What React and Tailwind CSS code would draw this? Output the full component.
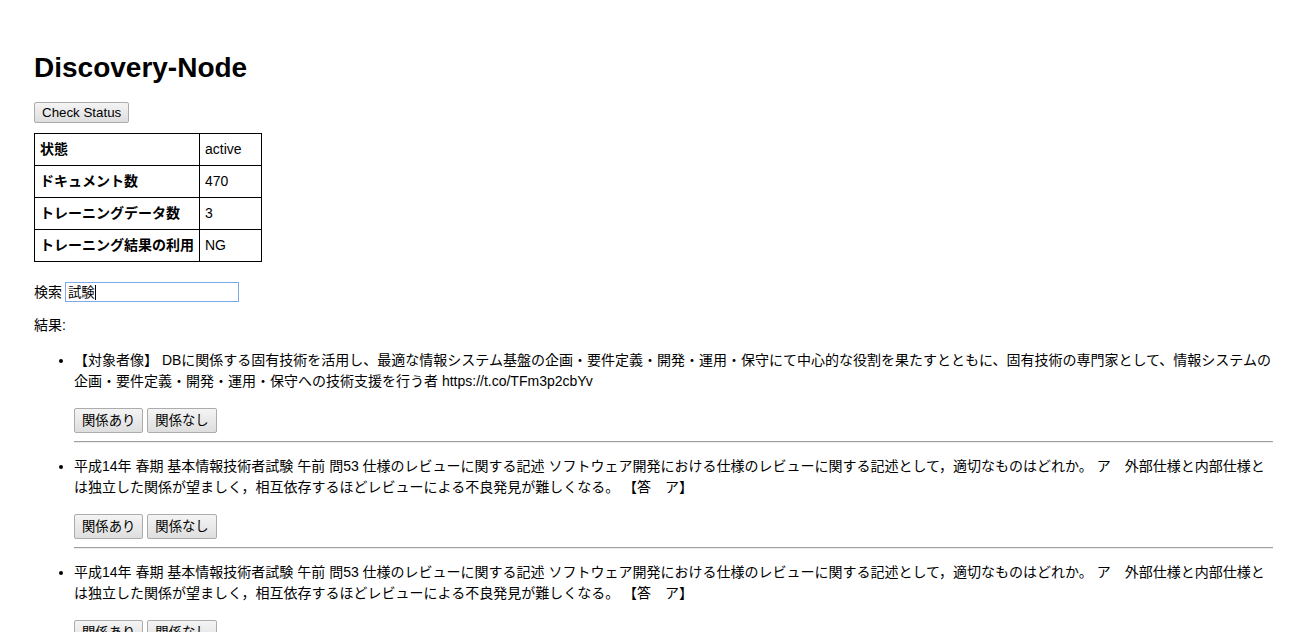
import React from "react";

const items = [
  {
    text: "【対象者像】 DBに関係する固有技術を活用し、最適な情報システム基盤の企画・要件定義・開発・運用・保守にて中心的な役割を果たすとともに、固有技術の専門家として、情報システムの企画・要件定義・開発・運用・保守への技術支援を行う者 https://t.co/TFm3p2cbYv",
  },
  {
    text: "平成14年 春期 基本情報技術者試験 午前 問53 仕様のレビューに関する記述 ソフトウェア開発における仕様のレビューに関する記述として，適切なものはどれか。 ア　外部仕様と内部仕様とは独立した関係が望ましく，相互依存するほどレビューによる不良発見が難しくなる。 【答　ア】",
  },
  {
    text: "平成14年 春期 基本情報技術者試験 午前 問53 仕様のレビューに関する記述 ソフトウェア開発における仕様のレビューに関する記述として，適切なものはどれか。 ア　外部仕様と内部仕様とは独立した関係が望ましく，相互依存するほどレビューによる不良発見が難しくなる。 【答　ア】",
  },
];

const rows = [
  ["状態", "active"],
  ["ドキュメント数", "470"],
  ["トレーニングデータ数", "3"],
  ["トレーニング結果の利用", "NG"],
];

function Btn({ children, h }) {
  return (
    <button
      className={`${h} px-[7px] border border-[#acacac] rounded-[2px] bg-gradient-to-b from-[#f4f4f4] to-[#dedede] text-[13.33px] leading-none text-black font-['Liberation_Sans','Noto_Sans_CJK_JP',sans-serif]`}
    >
      {children}
    </button>
  );
}

export default function App() {
  return (
    <div className="min-h-screen bg-white pl-[34px] pr-[22px] pt-[52px] font-['Liberation_Sans','Noto_Sans_CJK_JP',sans-serif] text-[14px] leading-[21px] text-black">
      <h1 className="text-[28px] leading-[32px] font-bold">Discovery-Node</h1>
      <div className="mt-[18px]">
        <Btn h="h-[21px]">Check Status</Btn>
      </div>
      <table className="mt-[10px] border-collapse table-fixed w-[227px]">
        <colgroup>
          <col className="w-[165px]" />
          <col className="w-[62px]" />
        </colgroup>
        <tbody>
          {rows.map(([k, v]) => (
            <tr key={k}>
              <th className="border border-black px-[5px] py-[5px] text-left font-bold whitespace-nowrap">{k}</th>
              <td className="border border-black px-[5px] py-[5px]">{v}</td>
            </tr>
          ))}
        </tbody>
      </table>
      <div className="mt-[20px] flex items-center h-[20px]">
        <span>検索</span>
        <div className="ml-[3px] w-[174px] h-[20px] border border-[#7fa8e6] flex items-center px-[2px] text-[13.33px]">
          <span>試験</span>
          <span className="inline-block w-px h-[15px] bg-black"></span>
        </div>
      </div>
      <div className="mt-[13px]">結果:</div>
      <ul className="list-disc pl-[40px] mt-[14px]">
        {items.map((it, i) => (
          <li key={i} className={i > 0 ? "mt-[13.5px]" : ""}>
            <div>{it.text}</div>
            <div className="mt-[15.5px] flex gap-[4px]">
              <Btn h="h-[25px]">関係あり</Btn>
              <Btn h="h-[25px]">関係なし</Btn>
            </div>
            <div className="mt-[8px] h-[2px] border-t border-t-[#9f9f9f] border-b border-b-[#ececec]"></div>
          </li>
        ))}
      </ul>
    </div>
  );
}
